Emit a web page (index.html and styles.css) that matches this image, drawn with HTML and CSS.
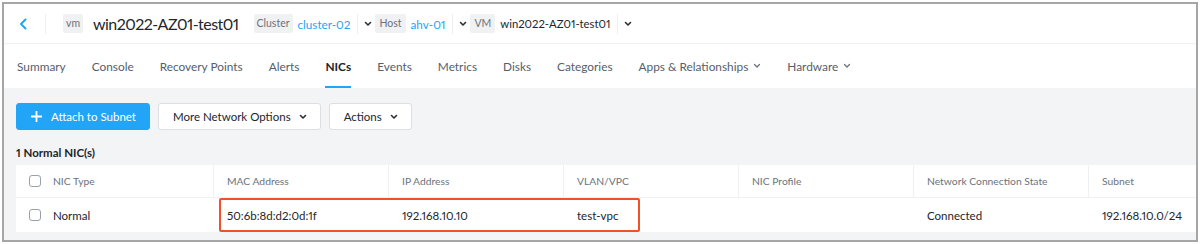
FILE: index.html
```html
<!DOCTYPE html>
<html>
<head>
<meta charset="utf-8">
<link rel="stylesheet" href="styles.css">
</head>
<body>
<div class="frame">
  <div class="header">
    <span class="back"><svg width="8" height="12" viewBox="0 0 8 12"><path d="M6.5 1.5 L2 6 L6.5 10.5" fill="none" stroke="#22a5f7" stroke-width="2" stroke-linecap="round" stroke-linejoin="round"/></svg></span>
    <span class="vdiv first"></span>
    <span class="badge vm">vm</span>
    <span class="title">win2022-AZ01-test01</span>
    <span class="badge cl">Cluster</span>
    <span class="link">cluster-02</span>
    <span class="vdiv"></span>
    <span class="chev"><svg width="8" height="6" viewBox="0 0 8 6"><path d="M1.5 1.5 L4 4 L6.5 1.5" fill="none" stroke="#2a2e33" stroke-width="1.6" stroke-linecap="round" stroke-linejoin="round"/></svg></span>
    <span class="badge">Host</span>
    <span class="link">ahv-01</span>
    <span class="vdiv"></span>
    <span class="chev"><svg width="8" height="6" viewBox="0 0 8 6"><path d="M1.5 1.5 L4 4 L6.5 1.5" fill="none" stroke="#2a2e33" stroke-width="1.6" stroke-linecap="round" stroke-linejoin="round"/></svg></span>
    <span class="badge">VM</span>
    <span class="vmname">win2022-AZ01-test01</span>
    <span class="vdiv"></span>
    <span class="chev"><svg width="8" height="6" viewBox="0 0 8 6"><path d="M1.5 1.5 L4 4 L6.5 1.5" fill="none" stroke="#2a2e33" stroke-width="1.6" stroke-linecap="round" stroke-linejoin="round"/></svg></span>
  </div>
  <div class="tabs">
    <span class="tab">Summary</span>
    <span class="tab">Console</span>
    <span class="tab">Recovery Points</span>
    <span class="tab">Alerts</span>
    <span class="tab active">NICs</span>
    <span class="tab">Events</span>
    <span class="tab">Metrics</span>
    <span class="tab">Disks</span>
    <span class="tab">Categories</span>
    <span class="tab">Apps &amp; Relationships <svg class="tchev" width="8" height="6" viewBox="0 0 8 6"><path d="M1.5 1.5 L4 4 L6.5 1.5" fill="none" stroke="#6b737d" stroke-width="1.3" stroke-linecap="round" stroke-linejoin="round"/></svg></span>
    <span class="tab">Hardware <svg class="tchev" width="8" height="6" viewBox="0 0 8 6"><path d="M1.5 1.5 L4 4 L6.5 1.5" fill="none" stroke="#6b737d" stroke-width="1.3" stroke-linecap="round" stroke-linejoin="round"/></svg></span>
  </div>
  <div class="content">
    <div class="toolbar">
      <button class="btn primary"><svg width="11" height="11" viewBox="0 0 11 11"><path d="M5.5 0.5 V10.5 M0.5 5.5 H10.5" stroke="#fff" stroke-width="1.8" stroke-linecap="round"/></svg>Attach to Subnet</button>
      <button class="btn">More Network Options <svg width="8" height="6" viewBox="0 0 8 6"><path d="M1.5 1.5 L4 4 L6.5 1.5" fill="none" stroke="#2a2e33" stroke-width="1.6" stroke-linecap="round" stroke-linejoin="round"/></svg></button>
      <button class="btn">Actions <svg width="8" height="6" viewBox="0 0 8 6"><path d="M1.5 1.5 L4 4 L6.5 1.5" fill="none" stroke="#2a2e33" stroke-width="1.6" stroke-linecap="round" stroke-linejoin="round"/></svg></button>
    </div>
    <div class="count">1 Normal NIC(s)</div>
    <div class="table">
      <div class="row head">
        <div class="cell c1"><span class="cb"></span>NIC Type</div>
        <div class="cell">MAC Address</div>
        <div class="cell">IP Address</div>
        <div class="cell">VLAN/VPC</div>
        <div class="cell">NIC Profile</div>
        <div class="cell">Network Connection State</div>
        <div class="cell last">Subnet</div>
      </div>
      <div class="row body">
        <div class="cell c1"><span class="cb"></span>Normal</div>
        <div class="cell">50:6b:8d:d2:0d:1f</div>
        <div class="cell">192.168.10.10</div>
        <div class="cell">test-vpc</div>
        <div class="cell"></div>
        <div class="cell">Connected</div>
        <div class="cell last">192.168.10.0/24</div>
        <div class="highlight"></div>
      </div>
    </div>
  </div>
</div>
</body>
</html>
```
FILE: styles.css
```css
* { box-sizing: border-box; }
html, body { margin: 0; padding: 0; background: #fff; }
body {
  font-family: Lato, "Open Sans", sans-serif;
  color: #22262b;
  font-variant-numeric: proportional-nums;
}
.frame {
  margin: 2px;
  width: 1196px;
  height: 240px;
  border: 2px solid #a6a6a6;
  overflow: hidden;
  background: #f3f4f6;
}
.header {
  height: 40px;
  background: #fff;
  border-bottom: 1px solid #eef0f3;
  display: flex;
  align-items: center;
  padding-left: 15px;
  font-size: 12px;
}
.back { display: flex; width: 8px; }
.vdiv { width: 1px; height: 20px; background: #eceef1; margin: 0 6px 0 7px; }
.vdiv.first { margin: 0 17px 0 18px; }
.badge {
  background: #f0f1f3;
  color: #6b737d;
  font-size: 10.5px;
  height: 19px;
  line-height: 19px;
  padding: 0 4px;
  border-radius: 2px;
  margin-right: 5px;
  text-align: center;
}
.badge.vm { width: 20px; padding: 0; margin-right: 10px; }
.badge.cl { width: 39px; padding: 0; }
.title { font-size: 16px; letter-spacing: -0.55px; color: #22262b; margin-right: 15px; }
.link { color: #22a5f7; font-size: 11.7px; }
.vmname { font-size: 11.3px; color: #22262b; }
.chev { display: flex; margin-right: 3px; }
.tabs {
  height: 44px;
  background: #fff;
  display: flex;
  align-items: stretch;
  padding-left: 13px;
  gap: 26px;
}
.tab {
  display: flex;
  align-items: center;
  gap: 5px;
  font-size: 11.85px;
  color: #56606b;
  border-bottom: 2px solid transparent;
  padding-top: 2px;
}
.tab.active { color: #22262b; font-weight: 700; border-bottom-color: #22a5f7; }
.content { padding: 15px 0 0 12px; }
.toolbar { display: flex; gap: 8px; }
.btn {
  font-family: inherit;
  height: 27px;
  border: 1px solid #dcdfe3;
  background: #fff;
  border-radius: 3px;
  font-size: 11.5px;
  color: #22262b;
  display: flex;
  align-items: center;
  gap: 8px;
  padding: 0 13px 0 14px;
}
.btn.primary { background: #22a5f7; border-color: #22a5f7; color: #fff; padding: 0 13px 0 14px; gap: 9px; }
.count { font-size: 11.5px; font-weight: 700; margin-top: 14px; height: 21px; line-height: 18px; }
.table { background: #fff; width: 1200px; }
.row { display: flex; position: relative; }
.row.head { height: 33px; border-bottom: 1px solid #f0f1f3; color: #6b737d; font-size: 10.3px; }
.row.body { height: 34px; font-size: 11.5px; color: #22262b; }
.cell { flex: 0 0 175px; display: flex; align-items: center; padding-left: 13px; }
.row.head .cell { border-right: 1px solid #eef0f2; }
.cell.c1 { flex-basis: 198px; padding-left: 13px; }
.cell.last { border-right: none; }
.cb {
  width: 12px; height: 12px;
  border: 1.5px solid #9ba1a9;
  border-radius: 3px;
  margin-right: 12px;
}
.highlight {
  position: absolute;
  left: 203px;
  top: 0;
  width: 421px;
  height: 34px;
  border: 2px solid #f0512a;
  border-radius: 2px;
}
```
